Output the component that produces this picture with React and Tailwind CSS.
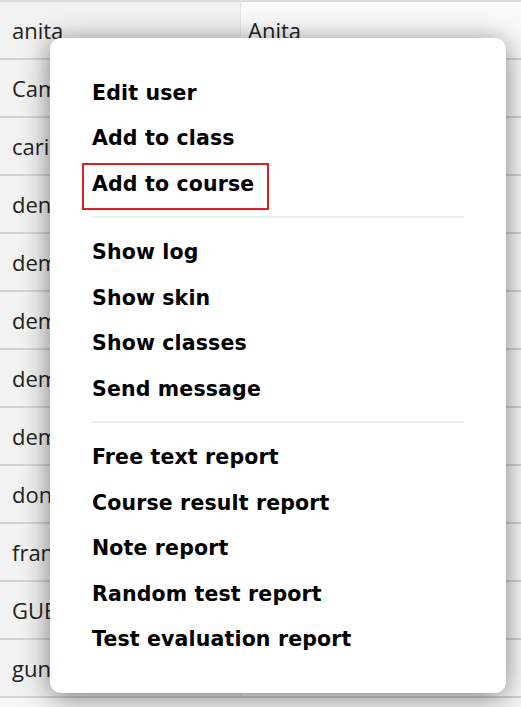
import React from 'react'

const rows = [
  ['anita', 'Anita'],
  ['Camilla', 'Camilla'],
  ['carina', 'Carina'],
  ['dennis', 'Dennis'],
  ['demo1', 'Demo'],
  ['demo2', 'Demo'],
  ['demo3', 'Demo'],
  ['demo4', 'Demo'],
  ['donald', 'Donald'],
  ['frank', 'Frank'],
  ['GUEST', 'Guest'],
  ['gunnar', 'Gunnar'],
]

const groups = [
  ['Edit user', 'Add to class', 'Add to course'],
  ['Show log', 'Show skin', 'Show classes', 'Send message'],
  ['Free text report', 'Course result report', 'Note report', 'Random test report', 'Test evaluation report'],
]

const MenuItem = ({ label, marked }) => (
  <div className="relative h-[45.5px] flex items-center text-[20.5px] tracking-[0.15px] font-bold text-black leading-none">
    {label}
    {marked && (
      <span className="absolute left-[-10px] top-[1.5px] w-[187px] h-[47px] border-2 border-[#e31b23]" />
    )}
  </div>
)

export default function App() {
  return (
    <div className="relative w-[521px] h-[707px] overflow-hidden bg-[#f6f6f6]" style={{ fontFamily: '"Open Sans", "Noto Sans", sans-serif' }}>
      {/* Table behind */}
      <div className="border-t-2 border-[#dcdcdc]">
        {rows.map(([login, name], i) => (
          <div key={i} className="flex h-[58px] border-b-2 border-[#d4d4d4]">
            <div className="w-[240px] flex items-center pl-[12px] bg-[#f2f2f2] text-[22px] text-[#222]">{login}</div>
            <div className="flex-1 flex items-center pl-[7px] bg-[#fafafa] border-l border-[#e6e6e6] text-[22px] text-[#222]">{name}</div>
          </div>
        ))}
      </div>

      {/* Context menu */}
      <div
        className="absolute left-[50px] top-[38px] w-[456px] h-[655px] bg-white rounded-[11px] shadow-[0_4px_28px_rgba(0,0,0,0.5)] px-[42px] pt-[32px]"
        style={{ fontFamily: '"DejaVu Sans", Verdana, sans-serif' }}
      >
        {groups.map((items, g) => (
          <div key={g}>
            {g > 0 && <div className="h-[2px] bg-[#eeeeee] mt-[9px] mb-[12px]" />}
            {items.map((label) => (
              <MenuItem key={label} label={label} marked={label === 'Add to course'} />
            ))}
          </div>
        ))}
      </div>
    </div>
  )
}
